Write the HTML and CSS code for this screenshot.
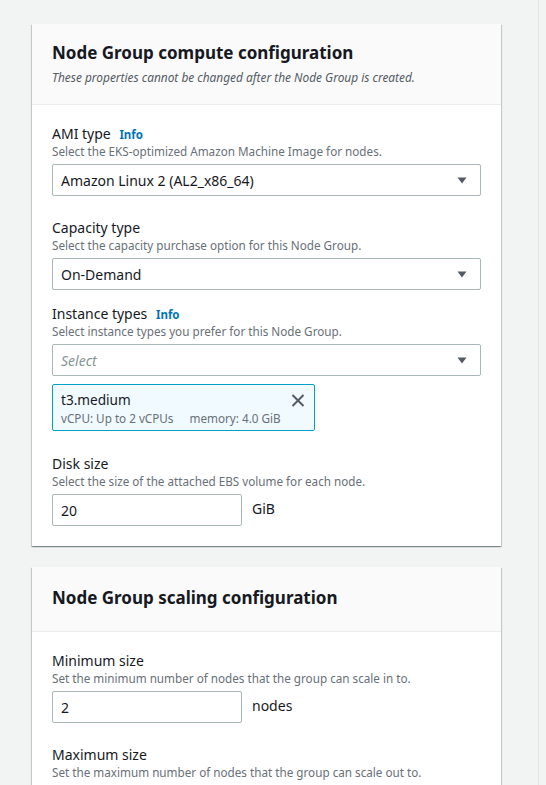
FILE: index.html
```html
<!DOCTYPE html>
<html lang="en">
<head>
<meta charset="utf-8">
<title>Node Group configuration</title>
<link rel="stylesheet" href="styles.css">
</head>
<body>
<div class="page">
  <main class="main">
    <section class="card">
      <header class="card-header">
        <h2 class="card-title">Node Group compute configuration</h2>
        <p class="card-subtitle">These properties cannot be changed after the Node Group is created.</p>
      </header>
      <div class="card-body">
        <div class="field">
          <div class="label">AMI type <a class="info">Info</a></div>
          <div class="desc">Select the EKS-optimized Amazon Machine Image for nodes.</div>
          <div class="select">
            <span class="select-value">Amazon Linux 2 (AL2_x86_64)</span>
            <svg class="caret" width="10" height="7" viewBox="0 0 10 7"><path d="M0.5 0.5 L9.5 0.5 L5 6.5 Z" fill="#545b64"/></svg>
          </div>
        </div>
        <div class="field field-capacity">
          <div class="label">Capacity type</div>
          <div class="desc">Select the capacity purchase option for this Node Group.</div>
          <div class="select">
            <span class="select-value">On-Demand</span>
            <svg class="caret" width="10" height="7" viewBox="0 0 10 7"><path d="M0.5 0.5 L9.5 0.5 L5 6.5 Z" fill="#545b64"/></svg>
          </div>
        </div>
        <div class="field field-instance">
          <div class="label">Instance types <a class="info">Info</a></div>
          <div class="desc">Select instance types you prefer for this Node Group.</div>
          <div class="select">
            <span class="select-placeholder">Select</span>
            <svg class="caret" width="10" height="7" viewBox="0 0 10 7"><path d="M0.5 0.5 L9.5 0.5 L5 6.5 Z" fill="#545b64"/></svg>
          </div>
          <div class="token">
            <div class="token-text">
              <div class="token-name">t3.medium</div>
              <div class="token-meta"><span>vCPU: Up to 2 vCPUs</span><span>memory: 4.0 GiB</span></div>
            </div>
            <svg class="token-close" width="14" height="13" viewBox="0 0 14 13"><path d="M1.5 1 L12.5 12 M12.5 1 L1.5 12" stroke="#545b64" stroke-width="2" fill="none"/></svg>
          </div>
        </div>
        <div class="field field-disk">
          <div class="label">Disk size</div>
          <div class="desc">Select the size of the attached EBS volume for each node.</div>
          <div class="input-row">
            <div class="input">20</div>
            <span class="unit">GiB</span>
          </div>
        </div>
      </div>
    </section>

    <section class="card card-2">
      <header class="card-header card-header-2">
        <h2 class="card-title">Node Group scaling configuration</h2>
      </header>
      <div class="card-body">
        <div class="field">
          <div class="label">Minimum size</div>
          <div class="desc">Set the minimum number of nodes that the group can scale in to.</div>
          <div class="input-row">
            <div class="input">2</div>
            <span class="unit">nodes</span>
          </div>
        </div>
        <div class="field field-max">
          <div class="label">Maximum size</div>
          <div class="desc">Set the maximum number of nodes that the group can scale out to.</div>
          <div class="input-row">
            <div class="input">2</div>
            <span class="unit">nodes</span>
          </div>
        </div>
      </div>
    </section>
  </main>
  <aside class="side"></aside>
</div>
</body>
</html>
```

FILE: styles.css
```css
html, body {
  margin: 0;
  padding: 0;
  background: #f2f3f3;
  font-family: "Noto Sans", "Open Sans", sans-serif;
  color: #16191f;
}

.page {
  display: flex;
  height: 785px;
  overflow: hidden;
}

.main {
  width: 539px;
  flex: none;
  padding: 24px 0 0 32px;
  box-sizing: border-box;
  border-right: 1px solid #e1e4e4;
}

.side {
  flex: 1;
  background: #f2f3f3;
}

.card {
  width: 469px;
  background: #ffffff;
  box-shadow: 0 1px 1px 0 rgba(0, 28, 36, 0.3), 1px 1px 1px 0 rgba(0, 28, 36, 0.15), -1px 1px 1px 0 rgba(0, 28, 36, 0.15);
}

.card-2 {
  margin-top: 21px;
}

.card-header {
  background: #fafafa;
  border-bottom: 1px solid #eaeded;
  padding: 18px 20px 0;
  height: 81px;
  box-sizing: border-box;
}

.card-header-2 {
  height: 65px;
  padding-top: 20px;
}

.card-title {
  margin: 0;
  font-size: 17px;
  line-height: 22px;
  font-weight: 700;
  color: #16191f;
}

.card-subtitle {
  margin: 5px 0 0;
  font-size: 11.9px;
  line-height: 16px;
  font-style: italic;
  color: #545b64;
}

.card-body {
  padding: 19px 20px 20px;
}

.field-capacity {
  margin-top: 22px;
}

.field-instance {
  margin-top: 14px;
}

.field-disk {
  margin-top: 23px;
}

.field-max {
  margin-top: 22px;
}

.label {
  font-size: 14px;
  line-height: 19px;
  height: 19px;
  color: #16191f;
}

.info {
  font-size: 11.5px;
  line-height: 1;
  font-weight: 700;
  color: #0073bb;
  margin-left: 5px;
}

.desc {
  font-size: 11.7px;
  line-height: 16px;
  color: #687078;
  margin-bottom: 5px;
}

.select {
  height: 32px;
  box-sizing: border-box;
  border: 1px solid #aab7b8;
  border-radius: 2px;
  background: #ffffff;
  display: flex;
  align-items: center;
  justify-content: space-between;
  padding: 0 13px 0 8px;
  font-size: 14px;
}

.select-placeholder {
  font-style: italic;
  color: #879596;
}

.token {
  margin-top: 8px;
  width: 263px;
  height: 47px;
  box-sizing: border-box;
  border: 1px solid #00a1c9;
  border-radius: 2px;
  background: #f1faff;
  display: flex;
  justify-content: space-between;
  align-items: flex-start;
  padding: 6px 9px 0 8px;
}

.token-name {
  font-size: 13.6px;
  line-height: 18px;
}

.token-meta {
  font-size: 11.7px;
  line-height: 16px;
  color: #687078;
  display: flex;
  gap: 16px;
  margin-top: 1px;
}

.token-close {
  margin-top: 3px;
}

.input-row {
  display: flex;
  align-items: center;
  gap: 10px;
}

.input {
  width: 190px;
  height: 32px;
  box-sizing: border-box;
  border: 1px solid #aab7b8;
  border-radius: 2px;
  background: #ffffff;
  padding: 0 8px;
  display: flex;
  align-items: center;
  font-size: 14px;
}

.unit {
  font-size: 14px;
  margin-top: -4px;
}
```
